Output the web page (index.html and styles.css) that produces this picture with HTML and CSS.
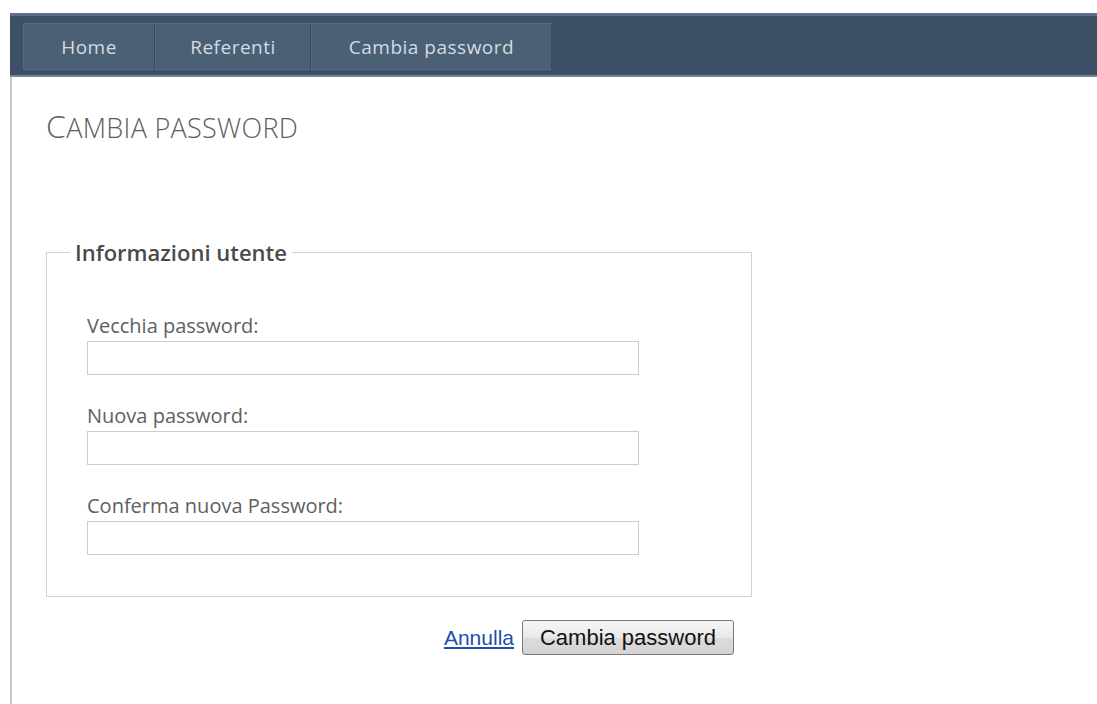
FILE: index.html
```html
<!DOCTYPE html>
<html lang="it">
<head>
<meta charset="utf-8">
<title>Cambia password</title>
<link rel="stylesheet" href="styles.css">
</head>
<body>
<div class="page">
  <nav class="menu">
    <ul class="tabs">
      <li class="tab tab-home"><a href="#">Home</a></li>
      <li class="tab tab-ref"><a href="#">Referenti</a></li>
      <li class="tab tab-pwd"><a href="#">Cambia password</a></li>
    </ul>
  </nav>
  <main class="content">
    <h2 class="title">Cambia password</h2>
    <form class="form">
      <fieldset class="box">
        <legend class="legend">Informazioni utente</legend>
        <div class="field">
          <label class="label" for="old">Vecchia password:</label>
          <input class="input" id="old" type="password">
        </div>
        <div class="field">
          <label class="label" for="new">Nuova password:</label>
          <input class="input" id="new" type="password">
        </div>
        <div class="field">
          <label class="label" for="conf">Conferma nuova Password:</label>
          <input class="input" id="conf" type="password">
        </div>
      </fieldset>
      <div class="actions">
        <a class="cancel" href="#">Annulla</a>
        <button class="submit" type="button">Cambia password</button>
      </div>
    </form>
  </main>
</div>
</body>
</html>
```

FILE: styles.css
```css
html, body {
  margin: 0;
  padding: 0;
  background: #ffffff;
  height: 100%;
}

body {
  font-family: "Open Sans", "Noto Sans", sans-serif;
  color: #555;
}

.page {
  margin-left: 10px;
  padding-top: 13px;
  min-height: 100%;
  box-sizing: border-box;
  display: flex;
  flex-direction: column;
}

/* top navigation bar */
.menu {
  height: 52px;
  background: #3e5065;
  border-top: 3px solid #5a6f91;
  border-bottom: 2px solid #7a8594;
  padding: 7px 0 0 13px;
  box-sizing: content-box;
}

.tabs {
  list-style: none;
  margin: 0;
  padding: 0;
  display: flex;
  height: 47px;
}

.tab {
  background: #4b5f75;
  border: 1px solid #566a80;
  border-right-color: #3a4b5e;
  display: flex;
  align-items: center;
  justify-content: center;
  box-sizing: border-box;
}

.tab + .tab {
  border-left-color: #55697e;
}

.tab a {
  color: #d3dbe3;
  text-decoration: none;
  font-size: 19px;
  letter-spacing: 0.5px;
}

.tab-home { width: 132px; }
.tab-ref { width: 156px; }
.tab-pwd { width: 241px; }

/* page body */
.content {
  flex: 1;
  border-left: 2px solid #c3cad2;
  padding: 31px 0 40px 34px;
}

.title {
  margin: 0;
  font-weight: 300;
  font-size: 27px;
  text-transform: uppercase;
  color: #5e5e5e;
  letter-spacing: 0.3px;
  line-height: 36px;
}

.title::first-letter {
  font-size: 32px;
}

.form {
  width: 706px;
  margin-top: 94px;
}

.box {
  margin: 0;
  border: 1px solid #d3d3d3;
  padding: 50px 0 41px 40px;
  min-width: 0;
}

.legend {
  font-weight: 600;
  font-size: 22px;
  color: #4a4a4a;
  padding: 0 5px;
  margin-left: -17px;
  line-height: 24px;
}

.field {
  display: flex;
  flex-direction: column;
}

.field + .field {
  margin-top: 29px;
}

.label {
  font-size: 20px;
  line-height: 24px;
  color: #606060;
  margin-bottom: 3px;
}

.input {
  width: 552px;
  height: 34px;
  box-sizing: border-box;
  border: 1px solid #cdcdcd;
  margin: 0;
  padding: 2px 6px;
  background: #fff;
}

.actions {
  display: flex;
  justify-content: flex-end;
  align-items: center;
  gap: 8px;
  padding-right: 18px;
  margin-top: 23px;
}

.cancel {
  font-family: "Liberation Sans", Arial, sans-serif;
  font-size: 21px;
  color: #1d4fad;
  text-decoration: underline;
}

.submit {
  font-family: "Liberation Sans", Arial, sans-serif;
  font-size: 22px;
  color: #111;
  width: 212px;
  height: 35px;
  border: 1px solid #7a7a7a;
  border-radius: 3px;
  background: linear-gradient(#f6f6f6 0%, #e9e9e9 50%, #dcdcdc 51%, #d4d4d4 100%);
  padding: 0;
}
```
